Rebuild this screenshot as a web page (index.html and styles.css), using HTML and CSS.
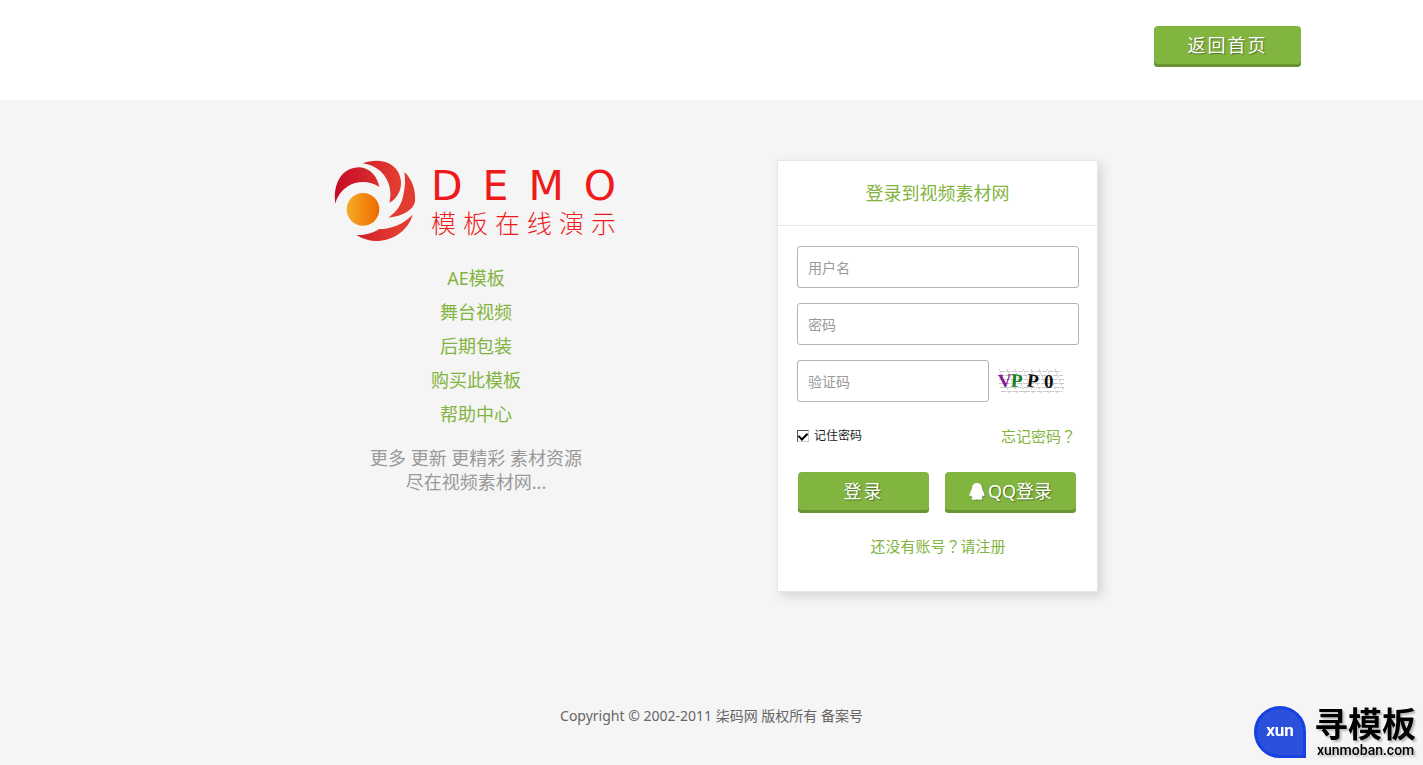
FILE: index.html
```html
<!DOCTYPE html>
<html lang="zh-CN">
<head>
<meta charset="utf-8">
<title>登录到视频素材网</title>
<link rel="stylesheet" href="styles.css">
</head>
<body>
<header class="header">
  <div class="header-inner">
    <button type="button" class="btn btn-home">返回首页</button>
  </div>
</header>

<main class="main">
  <section class="intro">
    <div class="logo">
      <svg class="logo-mark" viewBox="42 30 246 246" aria-hidden="true">
        <defs>
          <linearGradient id="red" gradientUnits="userSpaceOnUse" x1="46" x2="230" y1="0" y2="0"><stop offset="0" stop-color="#c60c26"/><stop offset="1" stop-color="#e23c30"/></linearGradient>
          <linearGradient id="orange" x1="0" x2="1"><stop offset="0" stop-color="#f5ab25"/><stop offset="1" stop-color="#ed6a00"/></linearGradient>
        </defs>
        <g fill="url(#red)">
          <path d="M46 161C38 108 62 52 118 52C151 54 172 80 178 111C150 91 110 92 85 108C64 121 51 140 46 161Z"/>
          <path d="M128 40C155 30 190 28 215 45C240 62 250 95 238 125C230 142 220 152 208 158C218 120 205 85 180 62C165 50 148 43 128 40Z"/>
          <path d="M253 66C275 85 288 120 285 155C278 181 250 197 205 203C228 188 246 165 251 130C256 110 256 85 253 66Z"/>
          <path d="M278 194C265 240 220 274 165 273C140 271 122 264 110 255C135 257 160 249 176 238C215 237 250 222 278 194Z"/>
        </g>
        <circle cx="129" cy="178" r="49" fill="url(#orange)"/>
      </svg>
      <div class="logo-text">
        <span class="logo-name">DEMO</span>
        <span class="logo-tag">模板在线演示</span>
      </div>
    </div>
    <nav class="links">
      <a href="#">AE模板</a>
      <a href="#">舞台视频</a>
      <a href="#">后期包装</a>
      <a href="#">购买此模板</a>
      <a href="#">帮助中心</a>
    </nav>
    <p class="slogan">更多 更新 更精彩 素材资源<br>尽在视频素材网...</p>
  </section>

  <section class="card">
    <h1 class="card-title">登录到视频素材网</h1>
    <form class="form">
      <input class="field" type="text" placeholder="用户名" aria-label="用户名">
      <input class="field" type="password" placeholder="密码" aria-label="密码">
      <div class="captcha-row">
        <input class="field field-code" type="text" placeholder="验证码" aria-label="验证码">
        <svg class="captcha" viewBox="0 0 68 26" role="img" aria-label="VPP0">
          <g stroke="#c9c9c9" fill="none">
            <path d="M2 3.500H63M1 7.500H65M1 11.500H66M1 15.500H67M2 19.500H66M3 23.500H65" stroke-dasharray="5 1"/>
            <path d="M1 1L11 25M9 1L19 25M17 1L27 25M25 1L35 25M33 1L43 25M41 1L51 25M49 1L59 25M57 1L66 23" stroke-dasharray="2 2"/>
          </g>
          <g class="captcha-glyphs">
            <text x="0" y="19" fill="#851c93" transform="rotate(-4 7 13)">V</text>
            <text x="13" y="19" fill="#16801c" transform="rotate(4 19 13)">P</text>
            <text x="29" y="19" fill="#111" transform="rotate(8 34 13)">P</text>
            <text x="46" y="20" fill="#111">0</text>
          </g>
        </svg>
      </div>
      <div class="options">
        <label class="remember"><input class="check" type="checkbox" checked>记住密码</label>
        <a class="forgot" href="#">忘记密码<span class="mark" lang="zh-TW">？</span></a>
      </div>
      <div class="actions">
        <button type="submit" class="btn">登录</button>
        <button type="button" class="btn btn-qq">
          <svg class="qq" viewBox="0 0 16 17" aria-hidden="true"><path fill="#fff" d="M8 0C4.800 0 3 2.400 3 5.300C3 7 1 9 .6 11.500C.3 13.200 1 13.800 2.200 12.600C2.500 13.400 2.900 14 3.500 14.500C1.700 15.500 2.600 16.700 4.700 16.700C6.200 16.700 7.200 16.400 8 16.400C8.800 16.400 9.800 16.700 11.300 16.700C13.400 16.700 14.300 15.500 12.500 14.500C13.100 14 13.500 13.400 13.800 12.600C15 13.800 15.700 13.200 15.400 11.500C15 9 13 7 13 5.300C13 2.400 11.200 0 8 0Z"/></svg>QQ登录
        </button>
      </div>
      <a class="register" href="#">还没有账号<span class="mark" lang="zh-TW">？</span>请注册</a>
    </form>
  </section>
</main>

<footer class="footer">Copyright © 2002-2011 柒码网 版权所有 备案号</footer>

<aside class="brand">
  <span class="brand-badge">xun</span>
  <span class="brand-text"><b class="brand-name">寻模板</b><span class="brand-url">xunmoban.com</span></span>
</aside>
</body>
</html>
```
FILE: styles.css
```css
* { box-sizing: border-box; }
body {
  margin: 0;
  min-height: 100vh;
  background: #f5f5f5;
  color: #666;
  font-family: "Noto Sans", "Noto Sans CJK SC", sans-serif;
  font-size: 14px;
}
a { color: #82b440; text-decoration: none; }
input, button { font-family: inherit; }

.header { height: 100px; padding-top: 26px; background: #fff; }
.header-inner {
  display: flex;
  justify-content: flex-end;
  max-width: 1179px;
  margin: 0 auto;
}

.btn {
  display: flex;
  align-items: center;
  justify-content: center;
  width: 131px;
  height: 41px;
  padding: 0 0 3px;
  border: 0;
  border-radius: 4px;
  background: #82b440;
  box-shadow: inset 0 -3px 0 #6a9434;
  color: #fff;
  font-size: 18px;
  line-height: 24px;
  letter-spacing: 2px;
  text-shadow: 1px 1px 1px #4f7323;
}
.btn-home { width: 147px; }
.btn-qq { letter-spacing: 0; }
.qq { width: 16px; height: 17px; margin-right: 3px; filter: drop-shadow(1px 1px 0 #6a9434); }

.main {
  display: flex;
  justify-content: space-between;
  align-items: flex-start;
  max-width: 773px;
  margin: 0 auto;
  padding-top: 60px;
}

.intro { width: 302px; text-align: center; }
.logo { display: flex; gap: 15px; padding-left: 9px; }
.logo-mark { flex: none; width: 82px; height: 82px; }
.logo-text { display: flex; flex-direction: column; text-align: left; color: #ee1a1c; white-space: nowrap; }
.logo-name {
  margin-top: 2px;
  font-family: "DejaVu Sans", sans-serif;
  font-size: 41px;
  line-height: 48px;
  letter-spacing: 20px;
}
.logo-tag {
  font-size: 25px;
  font-weight: 300;
  line-height: 26px;
  letter-spacing: 7px;
}
.links {
  display: flex;
  flex-direction: column;
  margin-top: 19px;
  font-size: 18px;
  line-height: 34px;
}
.slogan {
  margin: 15px 0 0;
  color: #999;
  font-size: 18px;
  line-height: 24px;
}

.card {
  width: 321px;
  border: 1px solid #e6e6e6;
  background: #fff;
  box-shadow: 4px 4px 10px #d4d4d4;
}
.card-title {
  margin: 0;
  border-bottom: 1px solid #e6e6e6;
  color: #82b440;
  font-size: 18px;
  font-weight: 400;
  line-height: 64px;
  text-align: center;
}
.form {
  display: flex;
  flex-direction: column;
  gap: 15px;
  padding: 20px 18px 33px 19px;
}
.field {
  width: 100%;
  height: 42px;
  padding: 0 10px;
  border: 1px solid #b3b3b3;
  border-radius: 3px;
  background: #fff;
  font-size: 14px;
}
.field::placeholder { color: #999; }
.captcha-row { display: flex; align-items: center; gap: 9px; }
.field-code { flex: none; width: 192px; }
.captcha { width: 68px; height: 26px; }
.captcha-glyphs { font-family: "Liberation Serif", serif; font-size: 19px; font-weight: 700; }

.options {
  display: flex;
  align-items: center;
  justify-content: space-between;
  margin-top: 7px;
  padding-right: 3px;
  line-height: 24px;
}
.remember { display: flex; align-items: center; gap: 5px; color: #222; font-size: 12px; }
.check {
  appearance: none;
  width: 12px;
  height: 12px;
  margin: 0;
  border: 1px solid;
  border-color: #555 #ccc #ccc #555;
  background: #fff;
}
.check:checked::before {
  content: "";
  display: block;
  width: 4px;
  height: 7px;
  margin: 0 auto;
  border: solid #000;
  border-width: 0 2px 2px 0;
  transform: rotate(45deg);
}
.forgot { font-size: 15px; }
.mark { font-family: "Noto Sans CJK TC", sans-serif; }
.actions { display: flex; justify-content: space-between; margin-top: 9px; padding: 0 3px 0 1px; }
.register { margin-top: 6px; font-size: 15px; line-height: 24px; text-align: center; }

.footer { margin-top: 112px; line-height: 24px; text-align: center; }

.brand { position: fixed; right: 7px; bottom: 7px; display: flex; gap: 8px; color: #000; }
.brand-badge {
  width: 52px;
  height: 52px;
  border: 3px solid #1741e0;
  border-radius: 50% 50% 0 50%;
  background: #2b50dc;
  color: #fff;
  font: 700 17px/42px Roboto, sans-serif;
  text-align: center;
}
.brand-text { display: flex; flex-direction: column; text-shadow: 2px 2px 2px #bbb; }
.brand-name { font-size: 34px; font-weight: 700; line-height: 37px; }
.brand-url { padding-left: 3px; font: 500 14px/15px Roboto, sans-serif; }
```
